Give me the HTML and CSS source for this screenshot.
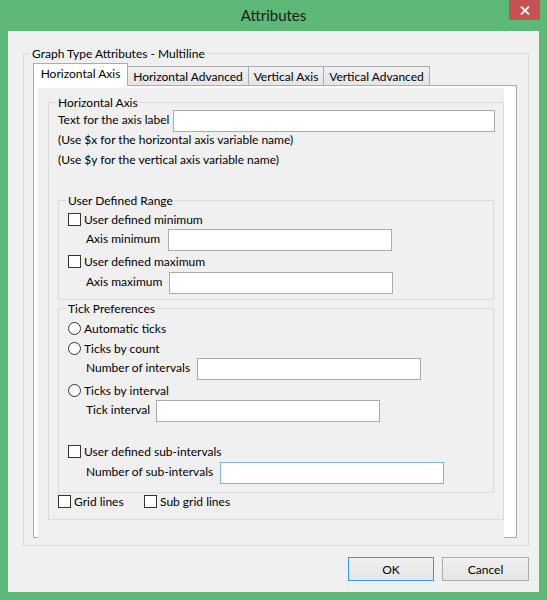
FILE: index.html
```html
<!DOCTYPE html>
<html>
<head>
<meta charset="utf-8">
<title>Attributes</title>
<link rel="stylesheet" href="styles.css">
</head>
<body>
<div class="window">
  <div class="titlebar">
    <div></div>
    <div class="title">Attributes</div>
    <div class="tb-right">
      <div class="close">
        <svg width="10" height="9" viewBox="0 0 10 9"><path d="M1 0.5L9 8.5M9 0.5L1 8.5" stroke="#fff" stroke-width="1.8" fill="none"/></svg>
      </div>
    </div>
  </div>
  <div class="client">
    <div class="group outer">
      <div class="gtitle">Graph Type Attributes - Multiline</div>
      <div class="tabs">
        <div class="tab sel t1">Horizontal Axis</div>
        <div class="tab t2">Horizontal Advanced</div>
        <div class="tab t3">Vertical Axis</div>
        <div class="tab t4">Vertical Advanced</div>
      </div>
      <div class="tabpanel">
        <div class="page">
          <div class="group ha">
            <div class="gtitle">Horizontal Axis</div>
            <div class="row field">
              <span class="lbl w-axislabel">Text for the axis label</span>
              <span class="input wide"></span>
            </div>
            <div class="row text">(Use $x for the horizontal axis variable name)</div>
            <div class="row text mt5">(Use $y for the vertical axis variable name)</div>

            <div class="group sub udr">
              <div class="gtitle">User Defined Range</div>
              <div class="row check mt4"><span class="box"></span>User defined minimum</div>
              <div class="row field indent mt2">
                <span class="lbl w-axismin">Axis minimum</span>
                <span class="input"></span>
              </div>
              <div class="row check mt3"><span class="box"></span>User defined maximum</div>
              <div class="row field indent mt3">
                <span class="lbl w-axismax">Axis maximum</span>
                <span class="input"></span>
              </div>
            </div>

            <div class="group sub tp">
              <div class="gtitle">Tick Preferences</div>
              <div class="row check mt5"><span class="box radio"></span>Automatic ticks</div>
              <div class="row check mt5"><span class="box radio"></span>Ticks by count</div>
              <div class="row field indent mt2">
                <span class="lbl w-numint">Number of intervals</span>
                <span class="input"></span>
              </div>
              <div class="row check mt3"><span class="box radio"></span>Ticks by interval</div>
              <div class="row field indent mt2">
                <span class="lbl w-tickint">Tick interval</span>
                <span class="input"></span>
              </div>
              <div class="row check mt22"><span class="box"></span>User defined sub-intervals</div>
              <div class="row field indent mt3">
                <span class="lbl w-subint">Number of sub-intervals</span>
                <span class="input focus"></span>
              </div>
            </div>

            <div class="row check grid-row">
              <span class="ck-item"><span class="box"></span>Grid lines</span>
              <span class="ck-item"><span class="box"></span>Sub grid lines</span>
            </div>
          </div>
        </div>
      </div>
    </div>
    <div class="buttons">
      <div class="btn default">OK</div>
      <div class="btn cancel">Cancel</div>
    </div>
  </div>
</div>
</body>
</html>
```

FILE: styles.css
```css
* { box-sizing: border-box; }
html, body { margin: 0; padding: 0; }
body {
  width: 547px;
  height: 600px;
  overflow: hidden;
  font-family: Lato, "Open Sans", sans-serif;
  font-size: 12px;
  color: #000;
  background: #5cb977;
}
.window {
  width: 547px;
  height: 600px;
  background: #5cb977;
  display: flex;
  flex-direction: column;
  padding: 0 8px 8px;
}
.titlebar {
  height: 31px;
  margin: 0 -8px;
  display: grid;
  grid-template-columns: 1fr auto 1fr;
}
.title {
  font-size: 15px;
  line-height: 31px;
  color: #1a1a1a;
}
.tb-right {
  display: flex;
  justify-content: flex-end;
  align-items: flex-start;
  padding-right: 7px;
}
.close {
  width: 31px;
  height: 20px;
  background: #c75050;
  display: flex;
  align-items: center;
  justify-content: center;
}
.client {
  flex: 1;
  background: #f0f0f0;
  padding: 22px 10px 0 15px;
  display: flex;
  flex-direction: column;
}
.group {
  border: 1px solid #dcdcdc;
  display: flex;
  flex-direction: column;
}
.gtitle {
  align-self: flex-start;
  margin: -8px 0 0 -2px;
  padding: 0 2px;
  height: 15px;
  line-height: 15px;
  background: #f0f0f0;
  white-space: nowrap;
}
.outer {
  height: 493px;
  padding: 0 11px 0 9px;
}
.outer > .gtitle { margin-left: -3px; }
.tabs {
  display: flex;
  align-items: flex-end;
  height: 22px;
  margin-top: 2px;
}
.tab {
  height: 19px;
  margin-left: -1px;
  border: 1px solid #acacac;
  border-bottom: none;
  background: linear-gradient(#f0f0f0, #e5e5e5);
  display: flex;
  align-items: center;
  justify-content: center;
  white-space: nowrap;
}
.tab.sel {
  height: 23px;
  margin-left: 0;
  margin-bottom: -1px;
  padding-bottom: 3px;
  background: #fff;
  position: relative;
  z-index: 1;
}
.t1 { width: 95px; }
.t2 { width: 122px; }
.t3 { width: 76px; }
.t4 { width: 107px; }
.tabpanel {
  width: 484px;
  height: 453px;
  border: 1px solid #acacac;
  background: #fff;
  padding: 2px 0 0 4px;
}
.page {
  width: 466px;
  height: 450px;
  background: #f0f0f0;
  padding: 14px 0 0 10px;
}
.ha {
  width: 456px;
  height: 418px;
  padding: 0 9px;
}
.sub { padding: 0 9px; }
.udr { height: 100px; margin-top: 33px; }
.tp { height: 185px; margin-top: 8px; }

.row {
  display: flex;
  align-items: center;
  white-space: nowrap;
}
.text, .check { height: 15px; line-height: 15px; }
.field { height: 22px; }
.indent { padding-left: 18px; }
.mt2 { margin-top: 2px; }
.mt3 { margin-top: 3px; }
.mt4 { margin-top: 4px; }
.mt5 { margin-top: 5px; }
.mt22 { margin-top: 22px; }

.lbl { flex: none; line-height: 15px; padding-bottom: 3px; }
.w-axislabel { width: 115px; }
.w-axismin { width: 82px; }
.w-axismax { width: 83px; }
.w-numint { width: 111px; }
.w-tickint { width: 70px; }
.w-subint { width: 134px; }

.input {
  flex: none;
  width: 224px;
  height: 22px;
  border: 1px solid #ababab;
  background: #fff;
}
.input.wide { width: 322px; }
.input.focus { border-color: #7eb4ea; }

.box {
  flex: none;
  width: 13px;
  height: 13px;
  margin-right: 3px;
  border: 1px solid #333;
  background: #fff;
}
.box.radio { border-radius: 50%; }

.grid-row { margin-top: 1px; }
.ck-item {
  display: flex;
  align-items: center;
  width: 86px;
}

.buttons {
  display: flex;
  justify-content: flex-end;
  gap: 8px;
  margin-top: 11px;
}
.btn {
  width: 86px;
  height: 24px;
  border: 1px solid #acacac;
  background: linear-gradient(#f0f0f0, #e5e5e5);
  display: flex;
  align-items: center;
  justify-content: center;
}
.btn.default { border-color: #3399ff; }
.btn.cancel { width: 87px; }
```
